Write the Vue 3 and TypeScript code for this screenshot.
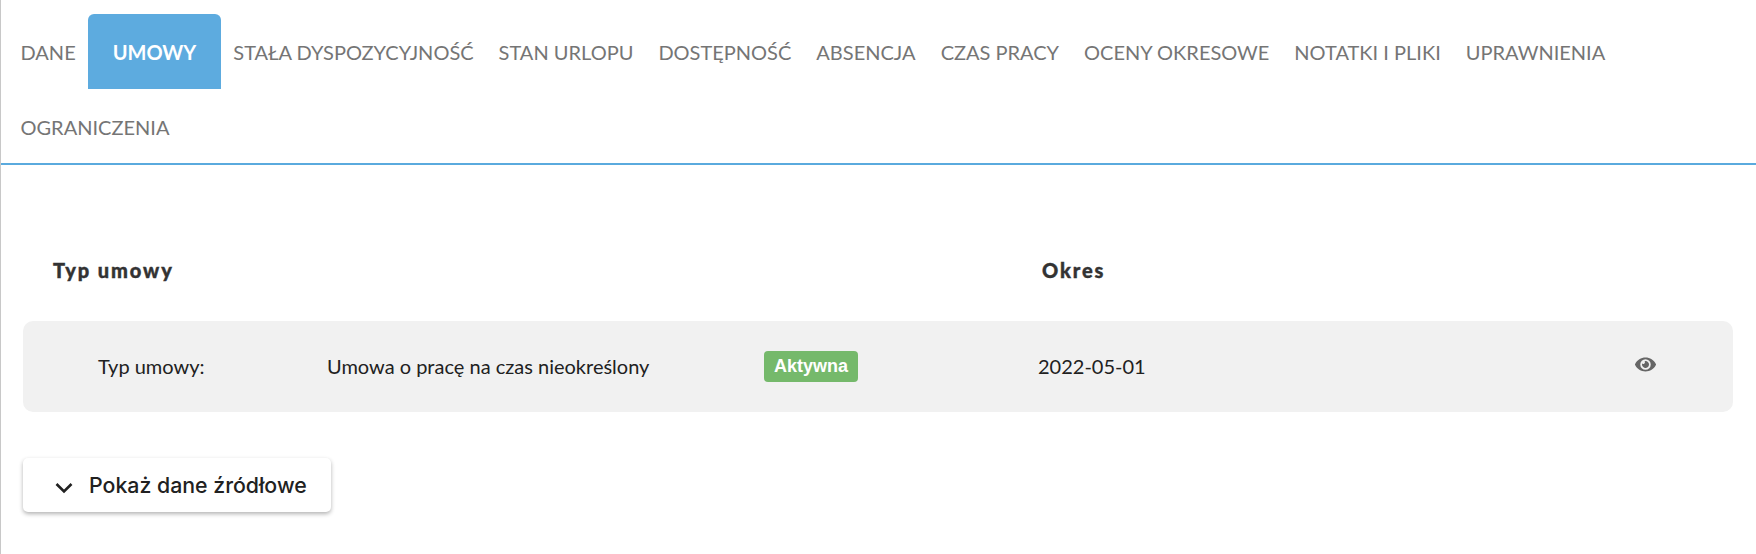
<script setup lang="ts">
const tabs = [
  'DANE',
  'UMOWY',
  'STAŁA DYSPOZYCYJNOŚĆ',
  'STAN URLOPU',
  'DOSTĘPNOŚĆ',
  'ABSENCJA',
  'CZAS PRACY',
  'OCENY OKRESOWE',
  'NOTATKI I PLIKI',
  'UPRAWNIENIA',
  'OGRANICZENIA',
]
const activeTab = 'UMOWY'
</script>

<template>
  <div class="page">
    <ul class="tabs">
      <li v-for="tab in tabs" :key="tab" class="tab" :class="{ active: tab === activeTab }">{{ tab }}</li>
    </ul>

    <div class="content">
      <div class="table-head">
        <div class="head-type">Typ umowy</div>
        <div class="head-period">Okres</div>
      </div>

      <div class="contract-row">
        <div class="label">Typ umowy:</div>
        <div class="value">Umowa o pracę na czas nieokreślony</div>
        <div class="status"><span class="badge">Aktywna</span></div>
        <div class="date">2022-05-01</div>
        <div class="actions">
          <svg class="eye" viewBox="0 0 576 512" width="21" height="19">
            <path
              fill="#666"
              d="M572.52 241.4C518.29 135.59 410.93 64 288 64S57.68 135.64 3.48 241.41a32.35 32.35 0 0 0 0 29.19C57.71 376.41 165.07 448 288 448s230.32-71.64 284.52-177.41a32.35 32.35 0 0 0 0-29.19zM288 400a144 144 0 1 1 144-144 143.93 143.93 0 0 1-144 144zm0-240a95.31 95.31 0 0 0-25.31 3.79 47.85 47.85 0 0 1-66.9 66.9A95.78 95.78 0 1 0 288 160z"
            />
          </svg>
        </div>
      </div>

      <button class="source-btn" type="button">
        <svg viewBox="0 0 20 20" width="20" height="20">
          <path d="M2.5 9 10 16.5 17.5 9" fill="none" stroke="#212121" stroke-width="2.6" />
        </svg>
        <span>Pokaż dane źródłowe</span>
      </button>
    </div>
  </div>
</template>

<style>
html,
body {
  background: #fff;
}
</style>

<style scoped>
.page {
  box-sizing: border-box;
  width: 1756px;
  height: 554px;
  overflow: hidden;
  border-left: 1px solid #c8c8c8;
  font-family: Lato, sans-serif;
}
.tabs {
  display: flex;
  flex-wrap: wrap;
  list-style: none;
  margin: 0;
  padding: 14px 0 0 7px;
  border-bottom: 2px solid #5aaade;
}
.tab {
  height: 74.5px;
  line-height: 77px;
  padding: 0 12.5px;
  font-size: 20px;
  color: #757575;
  white-space: nowrap;
}
.tab.active {
  padding: 0 24.5px;
  background: #5dabdf;
  border-radius: 6px 6px 0 0;
  color: #fff;
  font-weight: 700;
}
.content {
  padding: 0 23px 0 22px;
}
.table-head {
  display: grid;
  grid-template-columns: 989px 1fr;
  padding: 93px 0 0 30px;
  font-size: 20px;
  font-weight: 900;
  letter-spacing: 1.9px;
  -webkit-text-stroke: 0.4px #333;
  line-height: 24px;
  color: #333;
}
.contract-row {
  display: grid;
  grid-template-columns: 229px 437px 274px 597px 1fr;
  align-items: center;
  box-sizing: border-box;
  height: 91px;
  margin-top: 39px;
  padding: 0 0 2px 75px;
  background: #f1f1f1;
  border-radius: 10px;
  font-size: 20px;
  color: #212121;
}
.badge {
  display: inline-block;
  padding: 0 10px;
  line-height: 31px;
  background: #75b96b;
  border-radius: 4px;
  color: #fff;
  font-family: 'Liberation Sans', sans-serif;
  font-size: 18px;
  font-weight: 700;
}
.status {
  display: flex;
  margin-top: 2px;
}
.actions {
  display: flex;
  margin-top: -3px;
}
.source-btn {
  display: flex;
  align-items: center;
  gap: 15px;
  box-sizing: border-box;
  width: 308px;
  height: 54px;
  margin-top: 46px;
  padding: 0 0 0 31px;
  background: #fff;
  border: none;
  border-radius: 5px;
  box-shadow: 0 2px 4px rgba(0, 0, 0, 0.3);
  font-family: Inter, sans-serif;
  font-size: 21.3px;
  font-weight: 500;
  color: #212121;
}
</style>
